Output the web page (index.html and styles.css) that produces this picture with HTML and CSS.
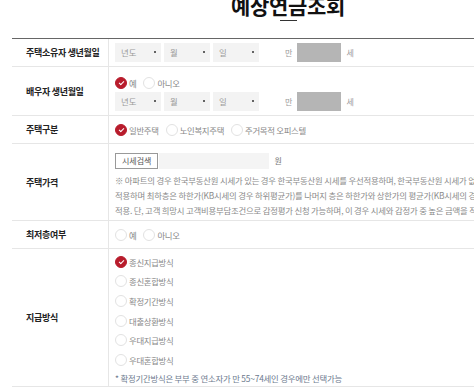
FILE: index.html
```html
<!DOCTYPE html>
<html>

<head>
    <meta charset="UTF-8">
    <link rel="stylesheet" href="styles.css">
</head>

<body>
    <div class="wrap">
        <h2 class="title">예상연금조회</h2>
        <div class="dash"></div>

        <div class="form">
            <div class="row">
                <div class="label">주택소유자 생년월일</div>
                <div class="field">
                    <div class="line">
                        <span class="sel">년도</span>
                        <span class="sel">월</span>
                        <span class="sel">일</span>
                        <span class="age">만</span>
                        <span class="agebox"></span>
                        <span class="age">세</span>
                    </div>
                </div>
            </div>

            <div class="row row-spouse">
                <div class="label">배우자 생년월일</div>
                <div class="field">
                    <div class="radios">
                        <label class="rd on"><i></i>예</label>
                        <label class="rd"><i></i>아니오</label>
                    </div>
                    <div class="line">
                        <span class="sel">년도</span>
                        <span class="sel">월</span>
                        <span class="sel">일</span>
                        <span class="age">만</span>
                        <span class="agebox"></span>
                        <span class="age">세</span>
                    </div>
                </div>
            </div>

            <div class="row">
                <div class="label">주택구분</div>
                <div class="field">
                    <div class="radios">
                        <label class="rd on"><i></i>일반주택</label>
                        <label class="rd"><i></i>노인복지주택</label>
                        <label class="rd"><i></i>주거목적 오피스텔</label>
                    </div>
                </div>
            </div>

            <div class="row row-price">
                <div class="label">주택가격</div>
                <div class="field">
                    <div class="line">
                        <span class="btn">시세검색</span>
                        <span class="inp"></span>
                        <span class="won">원</span>
                    </div>
                    <p class="note">※ 아파트의 경우 한국부동산원 시세가 있는 경우 한국부동산원 시세를 우선적용하며, 한국부동산원 시세가 없는 경우 KB시세를<br>적용하며 최하층은 하한가(KB시세의 경우 하위평균가)를 나머지 층은 하한가와 상한가의 평균가(KB시세의 경우 일반평균가)를<br>적용. 단, 고객 희망시 고객비용부담조건으로 감정평가 신청 가능하며, 이 경우 시세와 감정가 중 높은 금액을 적용</p>
                </div>
            </div>

            <div class="row">
                <div class="label">최저층여부</div>
                <div class="field">
                    <div class="radios">
                        <label class="rd"><i></i>예</label>
                        <label class="rd"><i></i>아니오</label>
                    </div>
                </div>
            </div>

            <div class="row row-pay">
                <div class="label">지급방식</div>
                <div class="field">
                    <ul class="paylist">
                        <li><label class="rd on"><i></i>종신지급방식</label></li>
                        <li><label class="rd"><i></i>종신혼합방식</label></li>
                        <li><label class="rd"><i></i>확정기간방식</label></li>
                        <li><label class="rd"><i></i>대출상환방식</label></li>
                        <li><label class="rd"><i></i>우대지급방식</label></li>
                        <li><label class="rd"><i></i>우대혼합방식</label></li>
                    </ul>
                    <p class="paynote">* 확정기간방식은 부부 중 연소자가 만 55~74세인 경우에만 선택가능</p>
                </div>
            </div>
        </div>
    </div>
</body>

</html>
```

FILE: styles.css
```css
html, body {
    margin: 0;
    padding: 0;
    overflow: hidden;
    background: #fff;
}
body {
    font-family: "Noto Sans CJK KR", "Noto Sans", sans-serif;
    color: #333;
}
.wrap {
    width: 552px;
    margin-left: 12px;
}
.title {
    margin: -6px 0 0;
    font-size: 21px;
    line-height: 22px;
    font-weight: 700;
    text-align: center;
    color: #111;
    letter-spacing: -0.3px;
}
.dash {
    width: 17px;
    height: 1px;
    margin: 4px auto 0;
    background: #333;
}

.form {
    margin-top: 17px;
    border-top: 1px solid #666;
}
.row {
    display: flex;
    min-height: 27px;
    border-bottom: 1px solid #e6e6e6;
}
.label {
    width: 82px;
    flex: none;
    display: flex;
    align-items: center;
    padding-left: 14px;
    border-right: 1px solid #e6e6e6;
    font-size: 9px;
    font-weight: 700;
    color: #222;
    letter-spacing: -0.3px;
}
.field {
    flex: 1;
    padding: 4px 0 4px 6px;
    display: flex;
    flex-direction: column;
    justify-content: center;
}
.line {
    display: flex;
    align-items: center;
    height: 19px;
}
.sel {
    position: relative;
    width: 40px;
    height: 19px;
    margin-right: 3px;
    padding-left: 6px;
    background: #f3f3f3;
    font-size: 8.4px;
    line-height: 19px;
    color: #9a9a9a;
}
.sel::after {
    content: "";
    position: absolute;
    right: 5px;
    top: 8px;
    width: 2px;
    height: 2px;
    border-radius: 1px;
    background: #333;
}
.age {
    font-size: 8px;
    color: #999;
    margin-left: 23px;
}
.agebox {
    width: 44px;
    height: 19px;
    margin-left: 5px;
    background: #b5b5b5;
}
.agebox + .age {
    margin-left: 5px;
}

.radios {
    display: flex;
    align-items: center;
    height: 18px;
}
.rd {
    display: inline-flex;
    align-items: center;
    margin-right: 7px;
    font-size: 8.4px;
    color: #888;
    letter-spacing: -0.3px;
}
.rd i {
    position: relative;
    width: 10px;
    height: 10px;
    margin-right: 2px;
    border: 1px solid #e2e2e2;
    border-radius: 50%;
    background: #fff;
}
.rd.on i {
    border-color: #b81c2c;
    background: #b81c2c;
}
.rd.on i::after {
    content: "";
    position: absolute;
    left: 3px;
    top: 3px;
    width: 4px;
    height: 2px;
    border-left: 1px solid #fff;
    border-bottom: 1px solid #fff;
    transform: rotate(-45deg);
}

.row-spouse .field {
    padding-top: 7px;
    padding-bottom: 4px;
}
.row-spouse .radios {
    height: 18px;
}

.row-price .field {
    justify-content: flex-start;
    padding-top: 7px;
    padding-bottom: 2px;
}
.btn {
    height: 14px;
    padding: 0 6px;
    border: 1px solid #999;
    font-size: 8px;
    line-height: 14px;
    color: #555;
    background: #fff;
}
.inp {
    width: 110px;
    height: 16px;
    margin-left: 1px;
    background: #f4f4f4;
}
.won {
    margin-left: 5px;
    font-size: 8px;
    color: #777;
}
.note {
    margin: 3px 0 0;
    font-size: 8.4px;
    line-height: 15px;
    color: #8a8a8a;
    white-space: nowrap;
    letter-spacing: -0.2px;
}

.row-pay .field {
    padding-top: 3px;
    padding-bottom: 0;
    justify-content: flex-start;
}
.paylist {
    margin: 0;
    padding: 0;
    list-style: none;
}
.paylist li {
    height: 19.6px;
    display: flex;
    align-items: center;
}
.paynote {
    margin: 0;
    font-size: 8.4px;
    line-height: 16px;
    color: #6d7a8e;
    white-space: nowrap;
    letter-spacing: -0.2px;
}
```
